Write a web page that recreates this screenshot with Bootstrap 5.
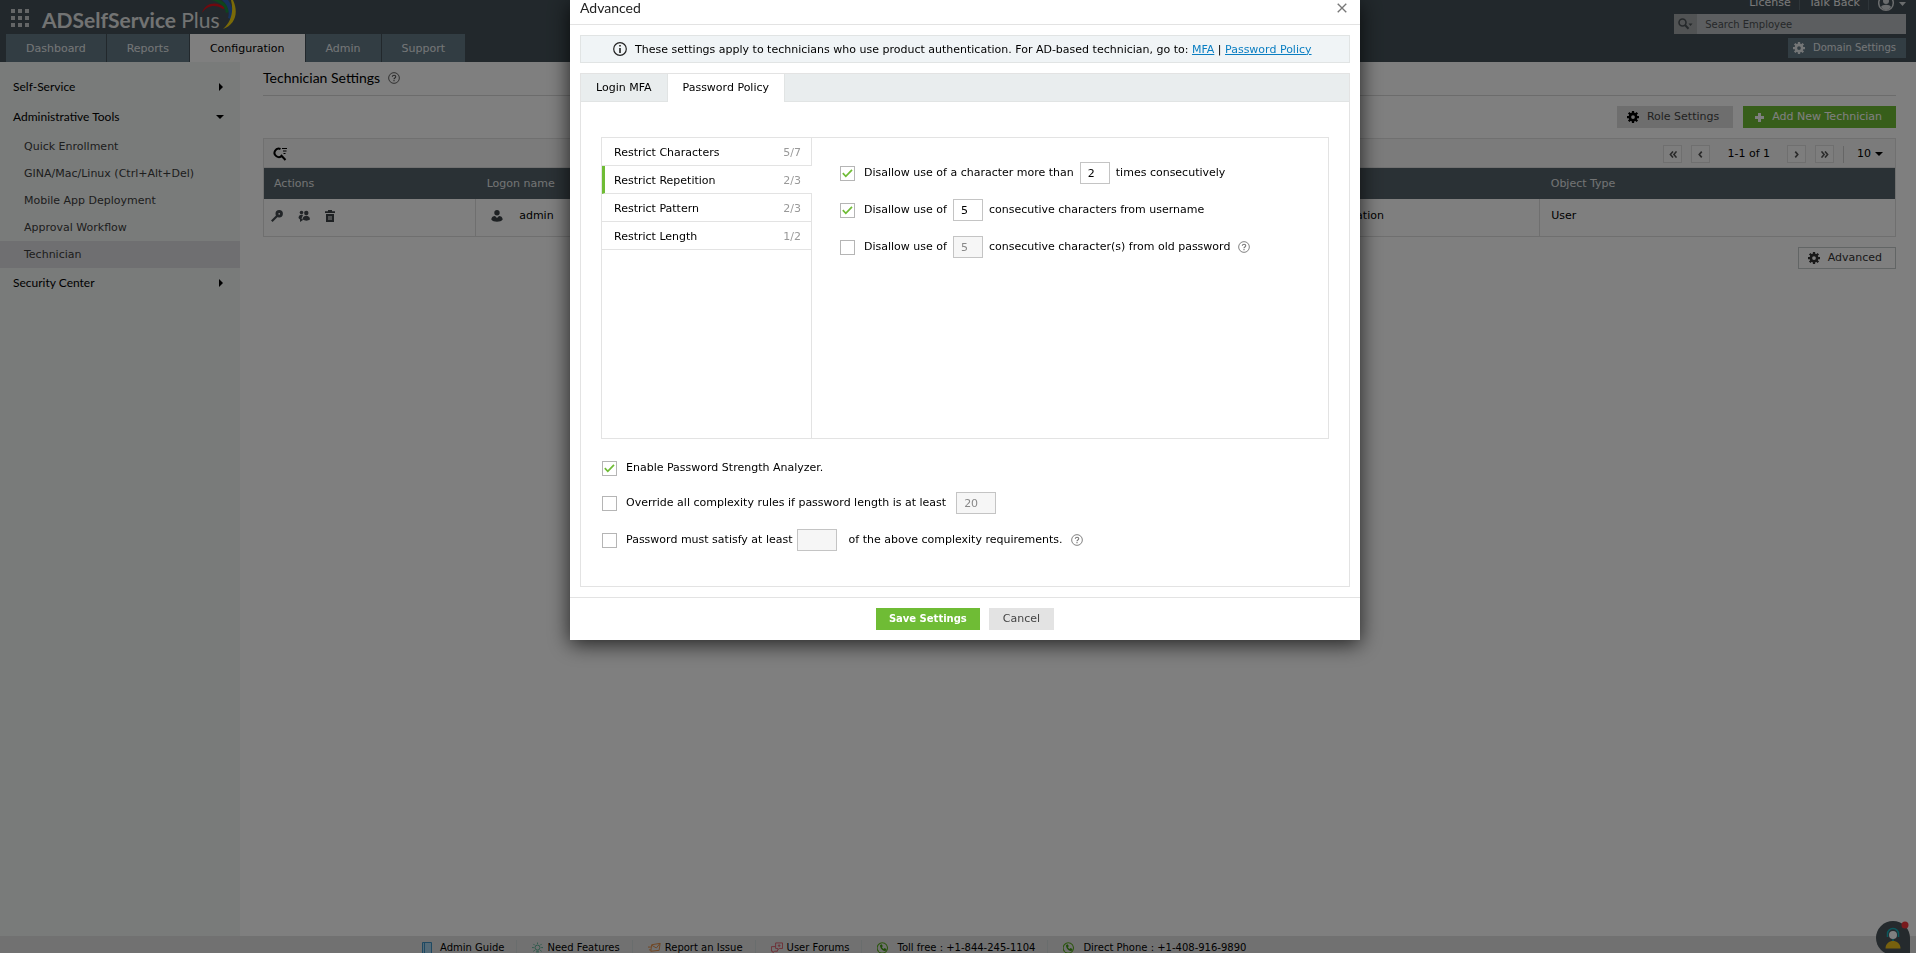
<!DOCTYPE html>
<html lang="en">
<head>
<meta charset="utf-8">
<meta name="viewport" content="width=device-width, initial-scale=1">
<title>ADSelfService Plus</title>
<link href="https://cdn.jsdelivr.net/npm/bootstrap@5.3.0/dist/css/bootstrap.min.css" rel="stylesheet">
<style>
body{font:11px/16px "DejaVu Sans",Verdana,sans-serif;color:#000;height:100vh;overflow:hidden}
.top-head{background:#445158;height:62px}
.logo-text{font:700 21px/22px Lato,sans-serif;color:#e4e6e6}
.logo-text span{font-weight:400}
.logo-arc{position:absolute;top:0;left:200px}
.brand-row{height:34px;padding:9px 0 0 11px;gap:13px}
.main-tabs{gap:1px;padding-left:6px}
.main-tabs .nav-link{background:#657a87;color:#e8ecee;height:28px;line-height:30px;padding:0 20px;border-radius:0}
.main-tabs .nav-link.active{background:#fff;color:#000}
.top-right{padding-right:10px}
.top-links{height:14px;line-height:6px}
.top-links a{color:#f4f4f4;text-decoration:none;height:10px;padding-right:8px;margin-right:9px;border-right:1px solid #5c6a72}
.search-box{width:232px;height:20px;background:#b9bdc0}
.search-box .drop{width:26px;background:#a2a6a8}
.search-box input{border:0;background:none;width:100%;padding:1px 8px 0;font-size:10px;outline:0;color:#333}
.search-box input::placeholder{color:#4c5154;opacity:1}
.dom-btn{background:#657a87;color:#e8ecee;height:20px;margin-top:4px;padding:0 10px 0 5px;font-size:10px;border:0}
.side-nav{width:240px;background:#f2f6f4;padding-top:10px}
.side-head{font:12px/30px Lato,sans-serif;color:#000;padding:0 16px 0 13px;text-decoration:none}
.side-group{padding-top:1px}
.side-item{line-height:26px;padding:1px 0 0 24px;color:#3c3c3c;text-decoration:none}
.side-item.on{background:#dedfe2}
.tri-r{border:4px solid transparent;border-left:4px solid #000;border-right:0;margin-right:1px}
.tri-d{border:4px solid transparent;border-top-color:#000;border-bottom:0}
.page-main{padding:0 20px 0 23px}
.page-title{font:14px/20px Lato,sans-serif;padding:6px 0 7px;border-bottom:1px solid #d9d9d9;height:34px}
.act-row{gap:10px;padding:10px 0}
.act-btn{height:22px;border:0;border-radius:0;padding:0 14px 0 10px;font-size:11px;line-height:20px;color:#444;background:#dcdcdc}
.act-btn.green{background:#6fbc35;color:#fff;padding:0 14px 0 12px}
.act-btn.line{background:#fff;border:1px solid #c5caca;color:#333;padding:0 13px 0 9px}
.grid-bar{border:1px solid #e1e1e1;background:#f7f7f7;height:30px;padding:2px 12px 0 9px}
.pager{gap:9px}
.pg-btn{width:19px;height:18px;border:1px solid #dedede;background:#fbfbfb;padding:0;line-height:12px}
.bar-v{width:1px;height:17px;background:#ccc}
.tech-table{table-layout:fixed;border:1px solid #dedede;border-top:0}
.tech-table th{background:#55626a;color:#e4e7e8;font-weight:400;height:31px;padding:0 10px;line-height:31px}
.tech-table td{height:37px;padding:9px 11px 8px;border-left:1px solid #dedede}
.tech-table th+th{padding-left:11px}
.tech-table td:first-child{border-left:0;padding:11px 7px 0}
.row-icons{gap:15px}
.foot{background:#e3e3e3;height:17px;font-size:10px;padding-left:422px;line-height:24px}
.foot a{color:#000;text-decoration:none;height:24px}
.foot-sep{width:1px;height:14px;background:#d2dada;margin:4px 15px 0 12px}
.chat{position:fixed;right:5px;bottom:-2px}
.modal{padding-left:14px;overflow:hidden}
.modal-dialog{max-width:790px;margin:0 auto}
.modal-content{border:0;border-radius:0;color:#000;box-shadow:0 4px 20px rgba(0,0,0,.75)}
.modal-header{padding:0 13px 9px 10px;border-color:#e3e3e3;border-radius:0}
.modal-title{font:14px/15px Lato,sans-serif;color:#222}
.x-btn{border:0;background:none;padding:0;height:13px;line-height:0}
.modal-body{padding:10px}
.note{border:1px solid #e1e4e4;background:#f0f4f6;height:28px;padding-left:32px}
.note span{padding-top:1px}
.note a{color:#0a7ec2}
.pane{border:1px solid #e3e3e3;margin-top:10px;padding:0 20px 35px}
.pane-tabs{background:#e9edee;border-bottom:1px solid #e1e4e4;height:28px;margin:0 -20px}
.pane-tabs .nav-link{color:#000;padding:0 15px;line-height:27px;height:28px;border-radius:0;border-right:1px solid #e1e4e4}
.pane-tabs .nav-link.active{background:#fff}
.rules{border:1px solid #e3e3e3;height:302px;margin:35px 0 18px}
.rule-list{width:210px;border-right:1px solid #e3e3e3}
.rule-list a{height:28px;line-height:29px;border-bottom:1px solid #e3e3e3;padding:0 10px 0 12px;color:#000;text-decoration:none}
.rule-list a span{color:#999}
.rule-list a.on{border-left:3px solid #6fbc35;padding-left:9px;margin-right:-1px;padding-right:11px;background:#fff}
.rule-set{padding:24px 0 0 28px}
.opt{height:22px}
.opt+.opt{margin-top:15px}
.opt.first+.opt{margin-top:13px}
.opt .form-check-input{width:15px;height:15px;margin:0 9px 0 0;border:1px solid #b5b5b5;border-radius:0;float:none;flex:none}
.opt .form-check-input:checked{background-color:#fff;background-size:13px;background-image:url("data:image/svg+xml,%3csvg xmlns='http://www.w3.org/2000/svg' viewBox='0 0 13 13'%3e%3cpath fill='none' stroke='%236fbc35' stroke-width='1.7' d='M1.8 6.2l3 3.1L11 2.8'/%3e%3c/svg%3e")}
.opt.wide{padding-left:1px}
.num{width:30px;height:22px;border:1px solid #c4c4c4;border-radius:0;padding:0 7px;font-size:11px;color:#000;margin:0 6px}
.num.big{width:40px}
.num.far{margin-left:10px}
.num:disabled{background:#f6f6f6;color:#888}
.modal-footer{border-color:#e3e3e3;border-radius:0;padding:10px 0;gap:9px}
.modal-footer .btn{margin:0;height:22px;padding:0 14px;border:0;border-radius:0;line-height:22px;font-size:11px}
.modal-footer .save{background:#6fbc35;color:#fff;font-size:10px;font-weight:700;padding:0 13px}
.modal-footer .cancel{background:#e3e3e3;color:#444}
</style>
</head>
<body class="d-flex flex-column">
<svg class="d-none" xmlns="http://www.w3.org/2000/svg">
  <symbol id="gear" viewBox="0 0 16 16"><circle cx="8" cy="8" r="4.200" fill="none" stroke="currentColor" stroke-width="3.400"/><path stroke="currentColor" stroke-width="3" d="M8 0v3.400M8 12.600V16M0 8h3.400M12.600 8H16M2.300 2.300l2.400 2.400M11.300 11.300l2.400 2.400M2.300 13.700l2.400-2.400M11.300 4.700l2.400-2.400"/></symbol>
  <symbol id="help" viewBox="0 0 13 13"><circle cx="6.500" cy="6.500" r="5.800" fill="none" stroke="currentColor"/><path fill="none" stroke="currentColor" stroke-width="1.200" d="M4.700 5.200c0-2.300 3.700-2.300 3.700 0 0 1.300-1.900 1.300-1.900 2.600M6.500 8.800v1.300"/></symbol>
  <symbol id="phone" viewBox="0 0 13 13"><path fill="none" stroke="#5cae22" stroke-width="1.200" d="M2 10.600A5.600 5.600 0 1 1 5 12L2 11.200"/><path fill="#3f9a10" d="M3.400 3.200l1.500-.8 1.400 2-1 1.200c.4.800 1.100 1.500 1.900 1.900l1.100-.9 2.100 1.300-.9 1.600c-2.900.9-6.800-2.900-6.100-6.300z"/></symbol>
</svg>

<header class="top-head d-flex justify-content-between position-relative flex-shrink-0">
  <div>
    <div class="brand-row d-flex">
      <svg width="18" height="18" viewBox="0 0 18 18" fill="#c9cdcf"><path d="M0 0h4v4H0zM7 0h4v4H7zM14 0h4v4h-4zM0 7h4v4H0zM7 7h4v4H7zM14 7h4v4h-4zM0 14h4v4H0zM7 14h4v4H7zM14 14h4v4h-4z"/></svg>
      <div class="logo-text">ADSelfService <span>Plus</span></div>
      <svg class="logo-arc" width="38" height="30" viewBox="0 0 38 30"><path fill="#e3121c" d="M2 13C5 2 18 1 25 8l-2 1C16 4 7 5 2 13z"/><path fill="#1b8a3b" d="M11 0h8c6 2 9 6 10 12l-3 1C25 6 20 2 11 0z"/><path fill="#2b62b8" d="M22 0h6c5 7 6 13 3 19l-3-1c2-6 0-13-6-18z"/><path fill="#f5d410" d="M31 0h2c6 13 2 25-10 29C31 22 34 12 31 0z"/></svg>
    </div>
    <nav class="main-tabs nav">
      <a class="nav-link" href="#">Dashboard</a><a class="nav-link" href="#">Reports</a><a class="nav-link active" href="#">Configuration</a><a class="nav-link" href="#">Admin</a><a class="nav-link" href="#">Support</a>
    </nav>
  </div>
  <div class="top-right d-flex flex-column align-items-end">
    <div class="top-links d-flex">
      <a href="#">License</a><a href="#">Talk Back</a>
      <svg width="28" height="12" viewBox="0 0 28 12"><circle cx="8" cy="3" r="7.300" fill="none" stroke="#d5d8da" stroke-width="1.500"/><circle cx="8" cy="1" r="3" fill="#d5d8da"/><path fill="#d5d8da" d="M3 7c1-3 9-3 10 0-3 4-7 4-10 0zM21 2h7l-3.500 4z"/></svg>
    </div>
    <div class="search-box d-flex">
      <div class="drop d-flex align-items-center justify-content-center"><svg width="15" height="12" viewBox="0 0 15 12"><circle cx="4.500" cy="4.500" r="3.500" fill="none" stroke="#4b5256" stroke-width="1.600"/><path stroke="#4b5256" stroke-width="2" d="M7 7l3.500 3.800"/><path fill="#4b5256" d="M10.500 5.500h4l-2 2.500z"/></svg></div>
      <input type="text" placeholder="Search Employee" aria-label="Search Employee">
    </div>
    <button class="dom-btn d-flex align-items-center gap-2" type="button"><svg width="12" height="12"><use href="#gear"/></svg>Domain Settings</button>
  </div>
</header>

<div class="d-flex flex-grow-1">
  <nav class="side-nav d-flex flex-column flex-shrink-0">
    <a class="side-head d-flex justify-content-between align-items-center" href="#">Self-Service<i class="tri-r"></i></a>
    <a class="side-head d-flex justify-content-between align-items-center" href="#">Administrative Tools<i class="tri-d"></i></a>
    <div class="side-group d-flex flex-column">
      <a class="side-item" href="#">Quick Enrollment</a>
      <a class="side-item" href="#">GINA/Mac/Linux (Ctrl+Alt+Del)</a>
      <a class="side-item" href="#">Mobile App Deployment</a>
      <a class="side-item" href="#">Approval Workflow</a>
      <a class="side-item on" href="#">Technician</a>
    </div>
    <a class="side-head d-flex justify-content-between align-items-center" href="#">Security Center<i class="tri-r"></i></a>
  </nav>
  <main class="page-main flex-grow-1">
    <h1 class="page-title d-flex align-items-center gap-2 m-0">Technician Settings <svg width="12" height="12" color="#555"><use href="#help"/></svg></h1>
    <div class="act-row d-flex justify-content-end">
      <button class="act-btn d-flex align-items-center gap-2" type="button"><svg width="12" height="12" color="#000"><use href="#gear"/></svg>Role Settings</button>
      <button class="act-btn green d-flex align-items-center gap-2" type="button"><svg width="9" height="9" viewBox="0 0 9 9"><path stroke="#fff" stroke-width="3" d="M4.500 0v9M0 4.500h9"/></svg>Add New Technician</button>
    </div>
    <div class="grid-bar d-flex align-items-center justify-content-between">
      <svg width="15" height="14" viewBox="0 0 15 14"><path fill="none" stroke="#000" stroke-width="2" d="M7.500 2A4.200 4.200 0 1 0 9 8.500M7.800 8l4.700 5"/><path stroke="#000" d="M9 1.500h5M10 4h3.500M10.500 6.500h2"/></svg>
      <div class="pager d-flex align-items-center">
        <button class="pg-btn" type="button" aria-label="First"><svg width="8" height="7" viewBox="0 0 9 8" fill="none" stroke="#555" stroke-width="1.800"><path d="M4.500.5L1.500 4l3 3.500M8.500.5L5.500 4l3 3.500"/></svg></button>
        <button class="pg-btn" type="button" aria-label="Previous"><svg width="5" height="7" viewBox="0 0 6 8" fill="none" stroke="#555" stroke-width="2"><path d="M4.500.5L1.500 4l3 3.500"/></svg></button>
        <span class="px-1 mx-1">1-1 of 1</span>
        <button class="pg-btn" type="button" aria-label="Next"><svg width="5" height="7" viewBox="0 0 6 8" fill="none" stroke="#555" stroke-width="2"><path d="M1.500.5l3 3.500-3 3.500"/></svg></button>
        <button class="pg-btn" type="button" aria-label="Last"><svg width="8" height="7" viewBox="0 0 9 8" fill="none" stroke="#555" stroke-width="1.800"><path d="M.5.5l3 3.500-3 3.500M4.500.5l3 3.500-3 3.500"/></svg></button>
        <span class="bar-v"></span>
        <button class="border-0 bg-transparent p-0 ps-1 d-flex align-items-center gap-1" type="button">10<i class="tri-d"></i></button>
      </div>
    </div>
    <table class="tech-table w-100">
      <colgroup><col style="width:13%"><col style="width:50%"><col style="width:15.200%"><col></colgroup>
      <thead><tr><th>Actions</th><th>Logon name</th><th>Mode</th><th>Object Type</th></tr></thead>
      <tbody><tr class="align-top">
        <td><div class="row-icons d-flex align-items-center">
          <svg width="12" height="12" viewBox="0 0 12 12"><circle cx="8.200" cy="3.800" r="2.300" fill="none" stroke="#444b50" stroke-width="2.800"/><path stroke="#444b50" stroke-width="2.200" d="M6 6L.8 11.200"/></svg>
          <svg width="12" height="12" viewBox="0 0 12 12" fill="#444b50"><circle cx="3.500" cy="2.500" r="1.800"/><circle cx="8.300" cy="3" r="2.200"/><path d="M4.500 9.500c0-5 7.500-5 7.500 0-2 1.500-5 1.500-7.500 0zM.5 8c0-3 2.500-4 4.500-3L3.500 8.500 5 10l-3 2V9.500z"/></svg>
          <svg width="10" height="12" viewBox="0 0 10 12" fill="#3c4347"><path d="M0 1.300h3V0h4v1.300h3V3H0zM1 4h8v8H1zm2.500 2v4h1V6zm2 0v4h1V6z" fill-rule="evenodd"/></svg></div></td>
        <td><div class="d-flex align-items-center gap-3 ps-1"><svg width="12" height="12" viewBox="0 0 12 12" fill="#3c4347"><circle cx="6" cy="2.800" r="2.700"/><path d="M.3 9.500c0-2.500 2-3.500 3.700-3.500L6 8l2-2c1.700 0 3.700 1 3.700 3.500C10 12.500 2 12.500.3 9.500z"/></svg>admin</div></td>
        <td>Authentication</td><td>User</td></tr></tbody>
    </table>
    <div class="act-row d-flex justify-content-end">
      <button class="act-btn line d-flex align-items-center gap-2" type="button"><svg width="12" height="12"><use href="#gear"/></svg>Advanced</button>
    </div>
  </main>
</div>

<footer class="foot d-flex flex-shrink-0">
  <a class="d-flex align-items-center gap-2" href="#"><svg width="10" height="12" viewBox="0 0 10 12"><path fill="#a9d4ee" stroke="#3f93c4" d="M.5.5h9v11h-9z"/><path stroke="#3f93c4" d="M2.500 1v10"/></svg>Admin Guide</a><span class="foot-sep"></span>
  <a class="d-flex align-items-center gap-1" href="#"><svg width="11" height="13" viewBox="0 0 12 13" fill="none" stroke="#4fae8e"><circle cx="6" cy="5.500" r="2.700"/><path d="M4.500 9.500h3M4.500 11.500h3M6 0v1.500M1.500 1.500L3 3M10.500 1.500L9 3M0 5.500h2M10 5.500h2M1.500 9.500L3 8.500M10.500 9.500L9 8.500"/></svg>Need Features</a><span class="foot-sep"></span>
  <a class="d-flex align-items-center gap-1" href="#"><svg width="13" height="12" viewBox="0 0 14 12" fill="none" stroke="#e2873a"><path d="M4 2.500l9-1.500-1 7.500-9 1zM4 3l5 3 4-5M0 5h3M1 8h2"/></svg>Report an Issue</a><span class="foot-sep"></span>
  <a class="d-flex align-items-center gap-1" href="#"><svg width="12" height="12" viewBox="0 0 13 12" fill="none" stroke="#dc5b68"><path d="M5 .5h7.500v6H9L7.500 8V6.500H5zM5 4.500H.5v5H2V11l2-1.500h3V8M8.800 2v3M7.300 3.500h3"/></svg>User Forums</a><span class="foot-sep"></span>
  <a class="d-flex align-items-center gap-2" href="#"><svg width="12" height="12"><use href="#phone"/></svg>Toll free : +1-844-245-1104</a><span class="foot-sep"></span>
  <a class="d-flex align-items-center gap-2" href="#"><svg width="12" height="12"><use href="#phone"/></svg>Direct Phone : +1-408-916-9890</a>
</footer>
<div class="chat"><svg width="35" height="34" viewBox="0 0 35 34"><path fill="#4a545a" d="M17 0a17 17 0 0 1 17 17v17H17A17 17 0 0 1 17 0z"/><path fill="none" stroke="#17b1bb" stroke-width="1.500" d="M11.500 16v-3a5.500 5.500 0 0 1 11 0v3M17 18v2"/><circle cx="17" cy="14" r="4" fill="#fff"/><path fill="#eec21c" d="M9.500 27.500c0-10 15-10 15 0z"/><circle cx="29" cy="4" r="3.500" fill="#f2353b"/></svg></div>

<div class="modal-backdrop show"></div>
<div class="modal show d-block" tabindex="-1" role="dialog" aria-labelledby="dlgTitle">
  <div class="modal-dialog">
    <div class="modal-content">
      <div class="modal-header">
        <h2 class="modal-title" id="dlgTitle">Advanced</h2>
        <button class="x-btn" type="button" aria-label="Close"><svg width="10" height="10" viewBox="0 0 11 11"><path stroke="#777" stroke-width="1.500" d="M.8.8l9.400 9.400M10.200.8L.8 10.200"/></svg></button>
      </div>
      <div class="modal-body">
        <div class="note d-flex align-items-center gap-2">
          <svg width="14" height="14" viewBox="0 0 14 14"><circle cx="7" cy="7" r="6.300" fill="none" stroke="#222" stroke-width="1.200"/><path stroke="#222" stroke-width="1.600" d="M7 3v1.600M7 6v5"/></svg>
          <span>These settings apply to technicians who use product authentication. For AD-based technician, go to: <a href="#">MFA</a> | <a href="#">Password Policy</a></span>
        </div>
        <div class="pane">
          <nav class="pane-tabs nav"><a class="nav-link" href="#">Login MFA</a><a class="nav-link active" href="#">Password Policy</a></nav>
          <div class="rules d-flex">
            <div class="rule-list d-flex flex-column">
              <a class="d-flex justify-content-between" href="#">Restrict Characters<span>5/7</span></a>
              <a class="d-flex justify-content-between on" href="#">Restrict Repetition<span>2/3</span></a>
              <a class="d-flex justify-content-between" href="#">Restrict Pattern<span>2/3</span></a>
              <a class="d-flex justify-content-between" href="#">Restrict Length<span>1/2</span></a>
            </div>
            <div class="rule-set">
              <div class="opt d-flex align-items-center"><input class="form-check-input" type="checkbox" id="c1" checked><label for="c1">Disallow use of a character more than</label><input class="num" type="text" value="2" aria-label="Repeat count"><span>times consecutively</span></div>
              <div class="opt d-flex align-items-center"><input class="form-check-input" type="checkbox" id="c2" checked><label for="c2">Disallow use of</label><input class="num" type="text" value="5" aria-label="Username characters"><span>consecutive characters from username</span></div>
              <div class="opt d-flex align-items-center"><input class="form-check-input" type="checkbox" id="c3"><label for="c3">Disallow use of</label><input class="num" type="text" value="5" disabled aria-label="Old password characters"><span>consecutive character(s) from old password</span><svg class="ms-2" width="12" height="12" color="#777"><use href="#help"/></svg></div>
            </div>
          </div>
          <div class="opt wide first d-flex align-items-center"><input class="form-check-input" type="checkbox" id="c4" checked><label for="c4">Enable Password Strength Analyzer.</label></div>
          <div class="opt wide d-flex align-items-center"><input class="form-check-input" type="checkbox" id="c5"><label for="c5">Override all complexity rules if password length is at least</label><input class="num big far" type="text" value="20" disabled aria-label="Password length"></div>
          <div class="opt wide d-flex align-items-center"><input class="form-check-input" type="checkbox" id="c6"><label for="c6">Password must satisfy at least</label><input class="num big ms-1 me-2" type="text" disabled aria-label="Requirement count"><span class="ps-1">of the above complexity requirements.</span><svg class="ms-2" width="12" height="12" color="#777"><use href="#help"/></svg></div>
        </div>
      </div>
      <div class="modal-footer justify-content-center">
        <button class="btn save" type="button">Save Settings</button>
        <button class="btn cancel" type="button">Cancel</button>
      </div>
    </div>
  </div>
</div>
<script src="https://cdn.jsdelivr.net/npm/bootstrap@5.3.0/dist/js/bootstrap.bundle.min.js"></script>
</body>
</html>
